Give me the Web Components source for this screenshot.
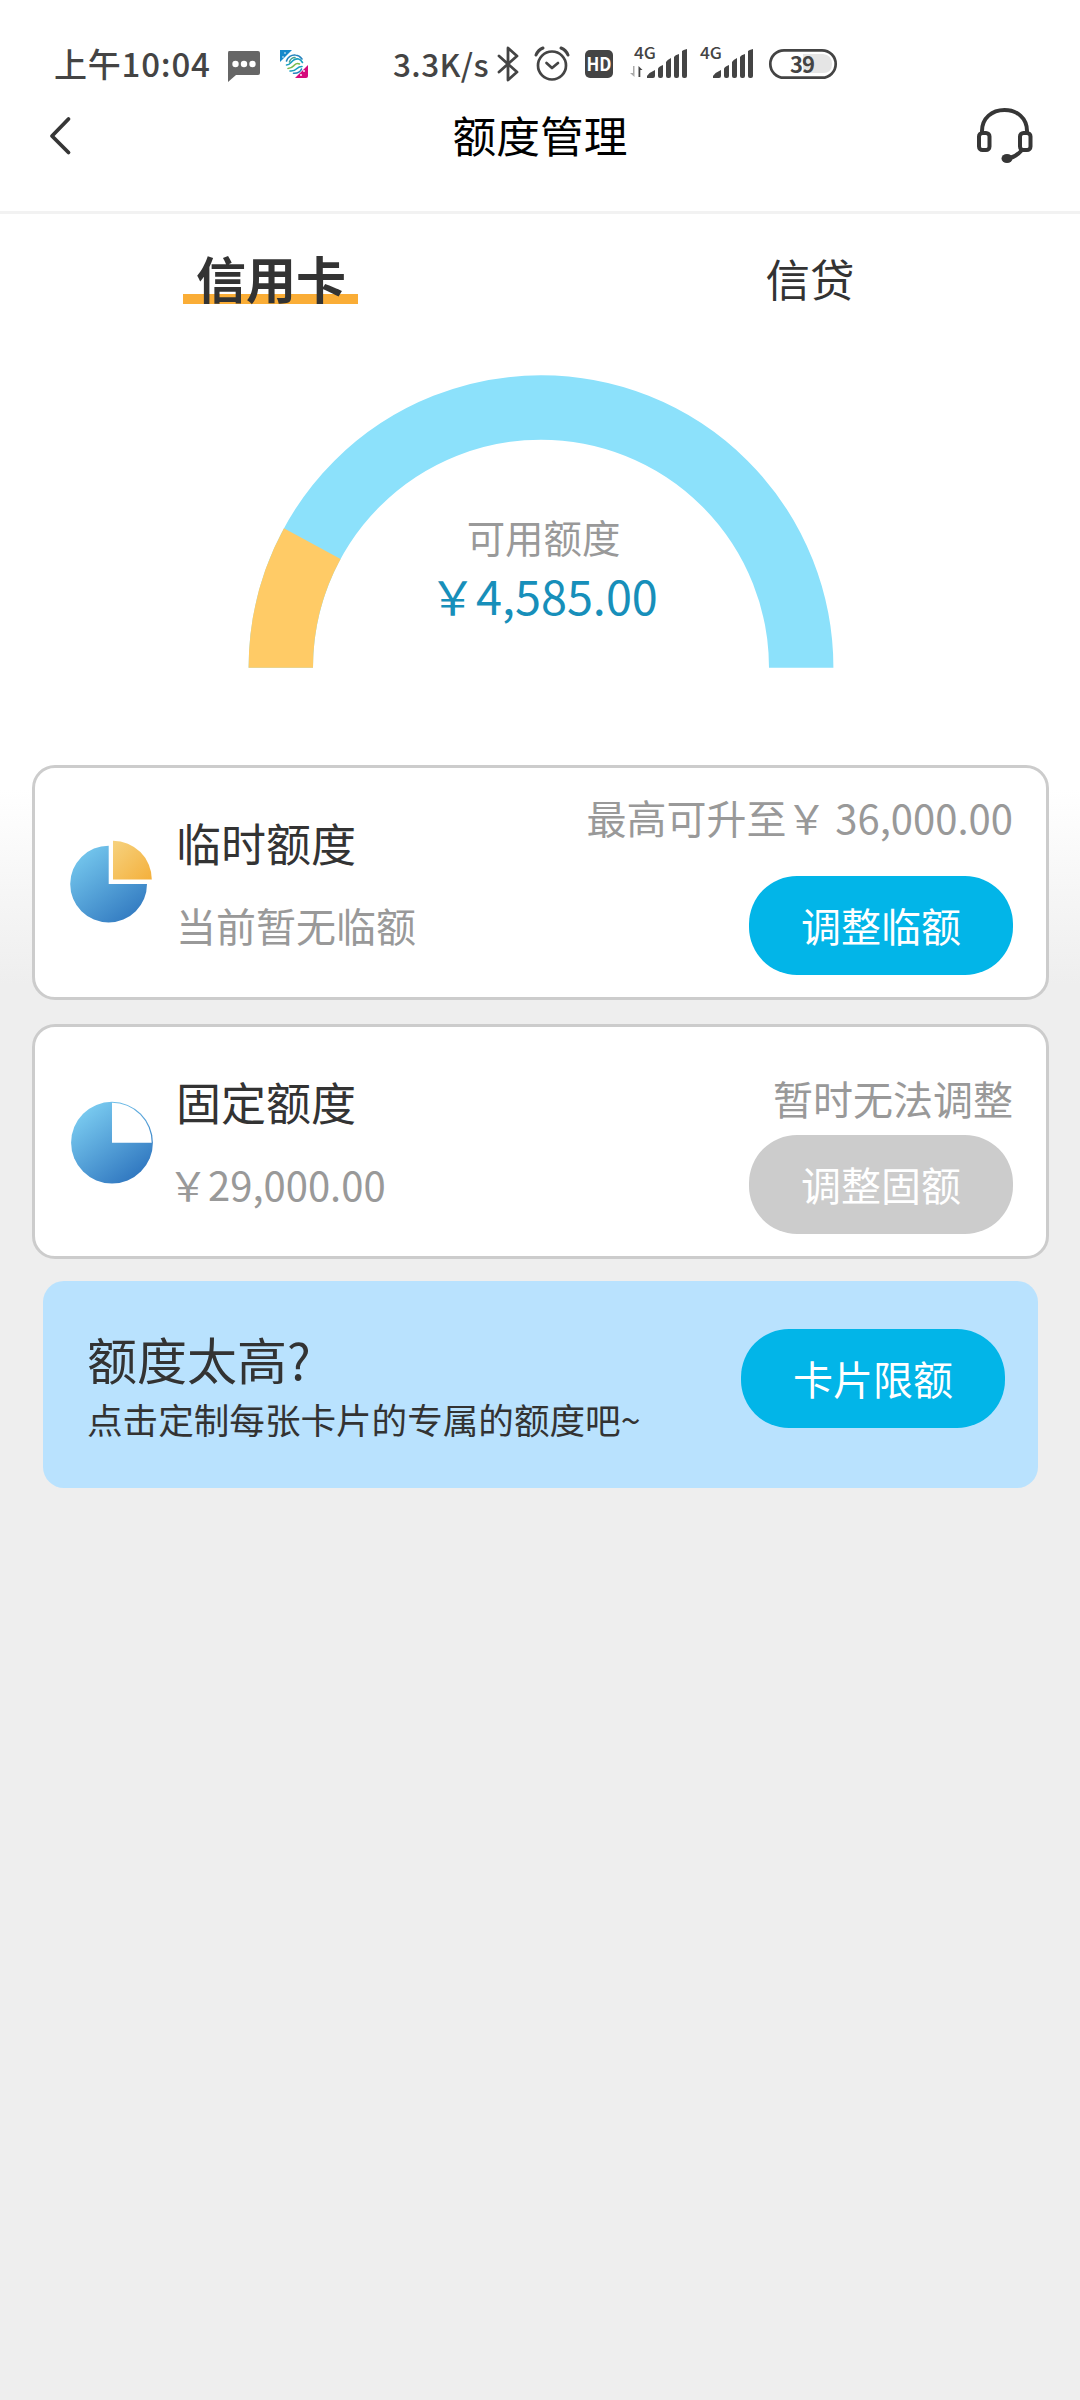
<!DOCTYPE html>
<html lang="zh-CN">
<head>
<meta charset="utf-8">
<title>额度管理</title>
<style>
body{margin:0;width:1080px;min-height:2400px;background:#eee;font-family:"Noto Sans CJK SC",sans-serif;color:#333}
</style>
</head>
<body>
<quota-page></quota-page>
<script>
function define(name, markup) {
  const template = document.createElement('template');
  template.innerHTML = markup;
  customElements.define(name, class extends HTMLElement {
    constructor() {
      super();
      this.attachShadow({mode: 'open'}).appendChild(template.content.cloneNode(true));
    }
  });
}

define('status-bar', `
<style>
:host{display:flex;height:100px;box-sizing:border-box;padding:40px 0 0 54px;color:#444;align-items:flex-start}
span,svg{flex:none}
.time{font-size:33px;line-height:46px;font-weight:500;width:173px;letter-spacing:.8px;white-space:nowrap}
.speed{font-size:31.500px;line-height:46px;font-weight:500;width:104px;letter-spacing:.4px;margin-left:83px;white-space:nowrap}
svg{display:block;height:48px;overflow:visible}
text{font-family:"Noto Sans CJK SC",sans-serif;font-weight:500}
</style>
<span class="time">上午10:04</span>
<svg width="83" height="48" viewBox="227 40 83 48">
  <path d="M229 51h29q2 0 2 2v20q0 2-2 2h-22l-8 7V53q0-2 1-2z" fill="#666"/>
  <g fill="#fff"><circle cx="235.500" cy="64" r="3.200"/><circle cx="244" cy="64" r="3.200"/><circle cx="252.500" cy="64" r="3.200"/></g>
  <path d="M280 50h12l-12 12z" fill="#1689cb"/><path d="M308 65v11q0 2-2 2h-11z" fill="#d50a7c"/>
  <g fill="#fff"><circle cx="285" cy="53" r=".8"/><circle cx="283" cy="57" r=".8"/><circle cx="304" cy="71" r=".9"/><circle cx="301" cy="75" r=".9"/></g>
  <g fill="none" stroke-width="1.600" stroke-linecap="round">
    <path d="M286.500 61c1-4 5-6.500 9-6 3 .3 5 2 6.500 4" stroke="#2583bd"/>
    <path d="M286.500 65c3 0 4-2 6-4s4-2.500 6-2 3 1.800 4 3.500" stroke="#189fc0"/>
    <path d="M288 68.500c4 0 5-2 6.500-3.500s3-2 5-1" stroke="#79b94c"/>
    <path d="M289.500 62c.500-2.500 3-4.500 5.500-4.500" stroke="#4da28c"/>
    <path d="M290 71c4 .5 5.500-1 7-2.500s3-2 5-2" stroke="#189fc0"/>
    <path d="M293.500 73.300c4 .2 7-1.800 8-4.300" stroke="#2583bd"/>
  </g>
</svg>
<span class="speed">3.3K/s</span>
<svg width="343" height="48" viewBox="497 40 343 48">
  <g fill="none" stroke="#444">
    <path d="M499 56l18 16-9 8V48l9 8-18 16" stroke-width="2.800" stroke-linejoin="round" stroke-linecap="round"/>
    <circle cx="552" cy="65.500" r="14" stroke-width="2.700"/>
    <path d="M546.500 63l5.500 5 6-5" stroke-width="2.700" stroke-linecap="round" stroke-linejoin="round"/>
    <path d="M536 55q2-5 7-7M568 55q-2-5-7-7" stroke-width="3" stroke-linecap="round"/>
  </g>
  <rect x="585" y="50" width="28" height="28" rx="5" fill="#444"/>
  <text x="586.500" y="71" font-size="18" textLength="25" lengthAdjust="spacingAndGlyphs" fill="#fff" style="font-weight:700">HD</text>
  <g fill="#444">
    <text x="634" y="59" font-size="15.500" textLength="22" lengthAdjust="spacingAndGlyphs">4G</text>
    <text x="700" y="59" font-size="15.500" textLength="22" lengthAdjust="spacingAndGlyphs">4G</text>
    <path id="b" d="M647 78v-2q3-4 8-6v6q0 2-2 2zM658 69q0-2 5-4v11q0 2-2 2h-1q-2 0-2-2zM666 62q1-2 5-4v18q0 2-2 2h-1q-2 0-2-2zM674 57q1-2 5-3v22q0 2-2 2h-1q-2 0-2-2zM682 51q1-1 5-2v27q0 2-2 2h-1q-2 0-2-2z"/>
    <use href="#b" x="66"/>
    <path d="M638.500 77V66l4 4h-2.200v7z"/><path d="M634.500 66v11l-4.500-4h3v-7z" fill="#aaa"/>
  </g>
  <path d="M803 54h20q9 1 9 10t-9 9h-20z" fill="#e5e5e5"/>
  <rect x="770.300" y="50.300" width="65.400" height="27.400" rx="13.700" fill="none" stroke="#444" stroke-width="2.700"/>
  <text x="790" y="72.500" font-size="22" textLength="25" fill="#444" style="font-weight:600">39</text>
</svg>`);

define('nav-bar', `
<style>
:host{display:flex;height:114px;box-sizing:border-box;padding:6px 48px 0 48px;border-bottom:3px solid #f2f2f2;justify-content:space-between;align-items:flex-start}
svg{display:block;overflow:visible;fill:none;stroke:#363636}
h1{margin:0;font-size:43.700px;line-height:56px;font-weight:400;color:#000}
</style>
<svg width="56" height="60" viewBox="48 106 56 60"><path d="M68.500 119L52 136l16.500 16.500" stroke-width="3.800" stroke-linecap="round" stroke-linejoin="round"/></svg>
<h1><slot></slot></h1>
<svg width="56" height="60" viewBox="976 106 56 60">
  <path d="M982 132v-1c0-13 10-21 22.500-21S1027 118 1027 131v1" stroke-width="4"/>
  <rect x="979" y="133" width="10.500" height="17" rx="3.500" stroke-width="4"/><rect x="1020" y="133" width="10.500" height="17" rx="3.500" stroke-width="4"/>
  <path d="M1022 150q-5 6-12 8" stroke-width="4"/><ellipse cx="1007" cy="158.500" rx="5.500" ry="4.500" fill="#363636" stroke="none"/>
</svg>`);

define('tab-item', `
<style>
:host{display:flex;flex:1;justify-content:center}
span{font-size:44.500px;line-height:60px;height:60px}
:host([active]) span{font-size:50px;line-height:58px;font-weight:700;padding:0 11.500px 0 13.500px;background:linear-gradient(#faad36,#faad36) 0 46px/100% 10px no-repeat}
</style><span><slot></slot></span>`);

define('tab-bar', `
<style>:host{display:flex;height:161px;box-sizing:border-box;padding-top:34px}</style><slot></slot>`);

define('quota-gauge', `
<style>
:host{display:grid;height:390px;grid-template-columns:248px 586px}
svg,div{grid-column:2;grid-row:1}
svg{display:block}
div{display:flex;flex-direction:column;align-items:center;padding-top:133px}
.label{font-size:38.400px;line-height:56px;color:#999;padding-left:5px}
.value{font-size:46.800px;line-height:62px;color:#178fba;padding-left:5px}
</style>
<svg width="586" height="293" viewBox="248 375 586 293">
  <g fill="none" stroke-width="64.400">
    <path d="M280.800 667.700A260.200 260.200 0 0 1 801.200 667.700" stroke="#8ce1fb"/>
    <path d="M280.800 667.700A260.200 260.200 0 0 1 312.240 543.700" stroke="#ffcb66"/>
  </g>
</svg>
<div><span class="label"><slot name="label"></slot></span><span class="value"><slot></slot></span></div>`);

define('pill-button', `
<style>
:host{display:flex;width:264px;height:99px;border-radius:48px;background:#02b5e8;color:#fff;font-size:40px;line-height:60px;align-items:center;justify-content:center;box-sizing:border-box;padding-bottom:2px}
:host([disabled]){background:#ccc}
</style><slot></slot>`);

define('quota-card', `
<style>
:host{display:flex;height:235px;box-sizing:border-box;border:3px solid #ccc;border-radius:23px;background:#fff;padding:0 33px;margin-bottom:24px}
.icon{width:108px;padding-top:69px}
.info{flex:1;padding:44px 0 0}
.action{display:flex;flex-direction:column;align-items:flex-end;padding-top:var(--note-top,19px)}
.title{font-size:45px;line-height:62px}
.sub{font-size:40px;line-height:60px;color:#999;margin-top:21px}
.note{font-size:40px;line-height:60px;color:#999;margin-bottom:var(--note-gap,29px);white-space:pre}
</style>
<div class="icon"><slot name="icon"></slot></div>
<div class="info"><div class="title"><slot name="title"></slot></div><div class="sub"><slot name="sub"></slot></div></div>
<div class="action"><div class="note"><slot name="note"></slot></div><slot name="button"></slot></div>`);

define('pie-split', `
<style>:host,svg{display:block}</style>
<svg width="86" height="88" viewBox="68 837 86 88">
  <defs><linearGradient id="b" x1=".15" y1=".1" x2=".8" y2=".95"><stop stop-color="#73c5ec"/><stop offset="1" stop-color="#337bc1"/></linearGradient>
  <linearGradient id="y" x1="0" y1="0" x2="1" y2="1"><stop stop-color="#f6d27f"/><stop offset="1" stop-color="#f4b03c"/></linearGradient></defs>
  <path d="M108.700 845.700A38.400 38.400 0 1 0 147 884H108.700z" fill="url(#b)"/>
  <path d="M113 840.700A38.800 38.800 0 0 1 151.800 879.500H113z" fill="url(#y)"/>
</svg>`);

define('pie-ring', `
<style>:host,svg{display:block}</style>
<svg width="86" height="88" viewBox="68 1096 86 88">
  <defs><linearGradient id="b" x1=".15" y1=".1" x2=".8" y2=".95"><stop stop-color="#7acbf0"/><stop offset="1" stop-color="#2f76bf"/></linearGradient></defs>
  <circle cx="112" cy="1142.700" r="40.900" fill="url(#b)"/><path d="M112 1102.700A39.700 40 0 0 1 151.700 1142.700H112z" fill="#fff"/>
</svg>`);

define('promo-banner', `
<style>
:host{display:flex;height:207px;box-sizing:border-box;margin:22px 11px 0 11px;border-radius:21px;background:#b9e2fe;padding:48px 33px 0 44px;justify-content:space-between}
.t{font-size:50px;line-height:58px}
.s{font-size:35.600px;line-height:56px;margin-top:4px}
</style>
<div><div class="t"><slot name="title"></slot></div><div class="s"><slot name="sub"></slot></div></div><slot name="button"></slot>`);

define('quota-page', `
<style>
:host{display:block;background:linear-gradient(#fff 0 790px,#eee 985px);height:2400px}
main{padding:0 31px 0 32px}
.fixed{--note-top:41px;--note-gap:7px;margin-bottom:0}
.yen{margin-left:-8px}
</style>
<status-bar></status-bar>
<nav-bar>额度管理</nav-bar>
<tab-bar><tab-item active>信用卡</tab-item><tab-item>信贷</tab-item></tab-bar>
<quota-gauge><span slot="label">可用额度</span>￥4,585.00</quota-gauge>
<main>
  <quota-card><pie-split slot="icon"></pie-split><span slot="title">临时额度</span><span slot="sub">当前暂无临额</span><span slot="note">最高可升至￥ 36,000.00</span><pill-button slot="button">调整临额</pill-button></quota-card>
  <quota-card class="fixed"><pie-ring slot="icon"></pie-ring><span slot="title">固定额度</span><span slot="sub" class="yen">￥29,000.00</span><span slot="note">暂时无法调整</span><pill-button slot="button" disabled>调整固额</pill-button></quota-card>
  <promo-banner><span slot="title">额度太高?</span><span slot="sub">点击定制每张卡片的专属的额度吧~</span><pill-button slot="button">卡片限额</pill-button></promo-banner>
</main>`);
</script>
</body>
</html>
